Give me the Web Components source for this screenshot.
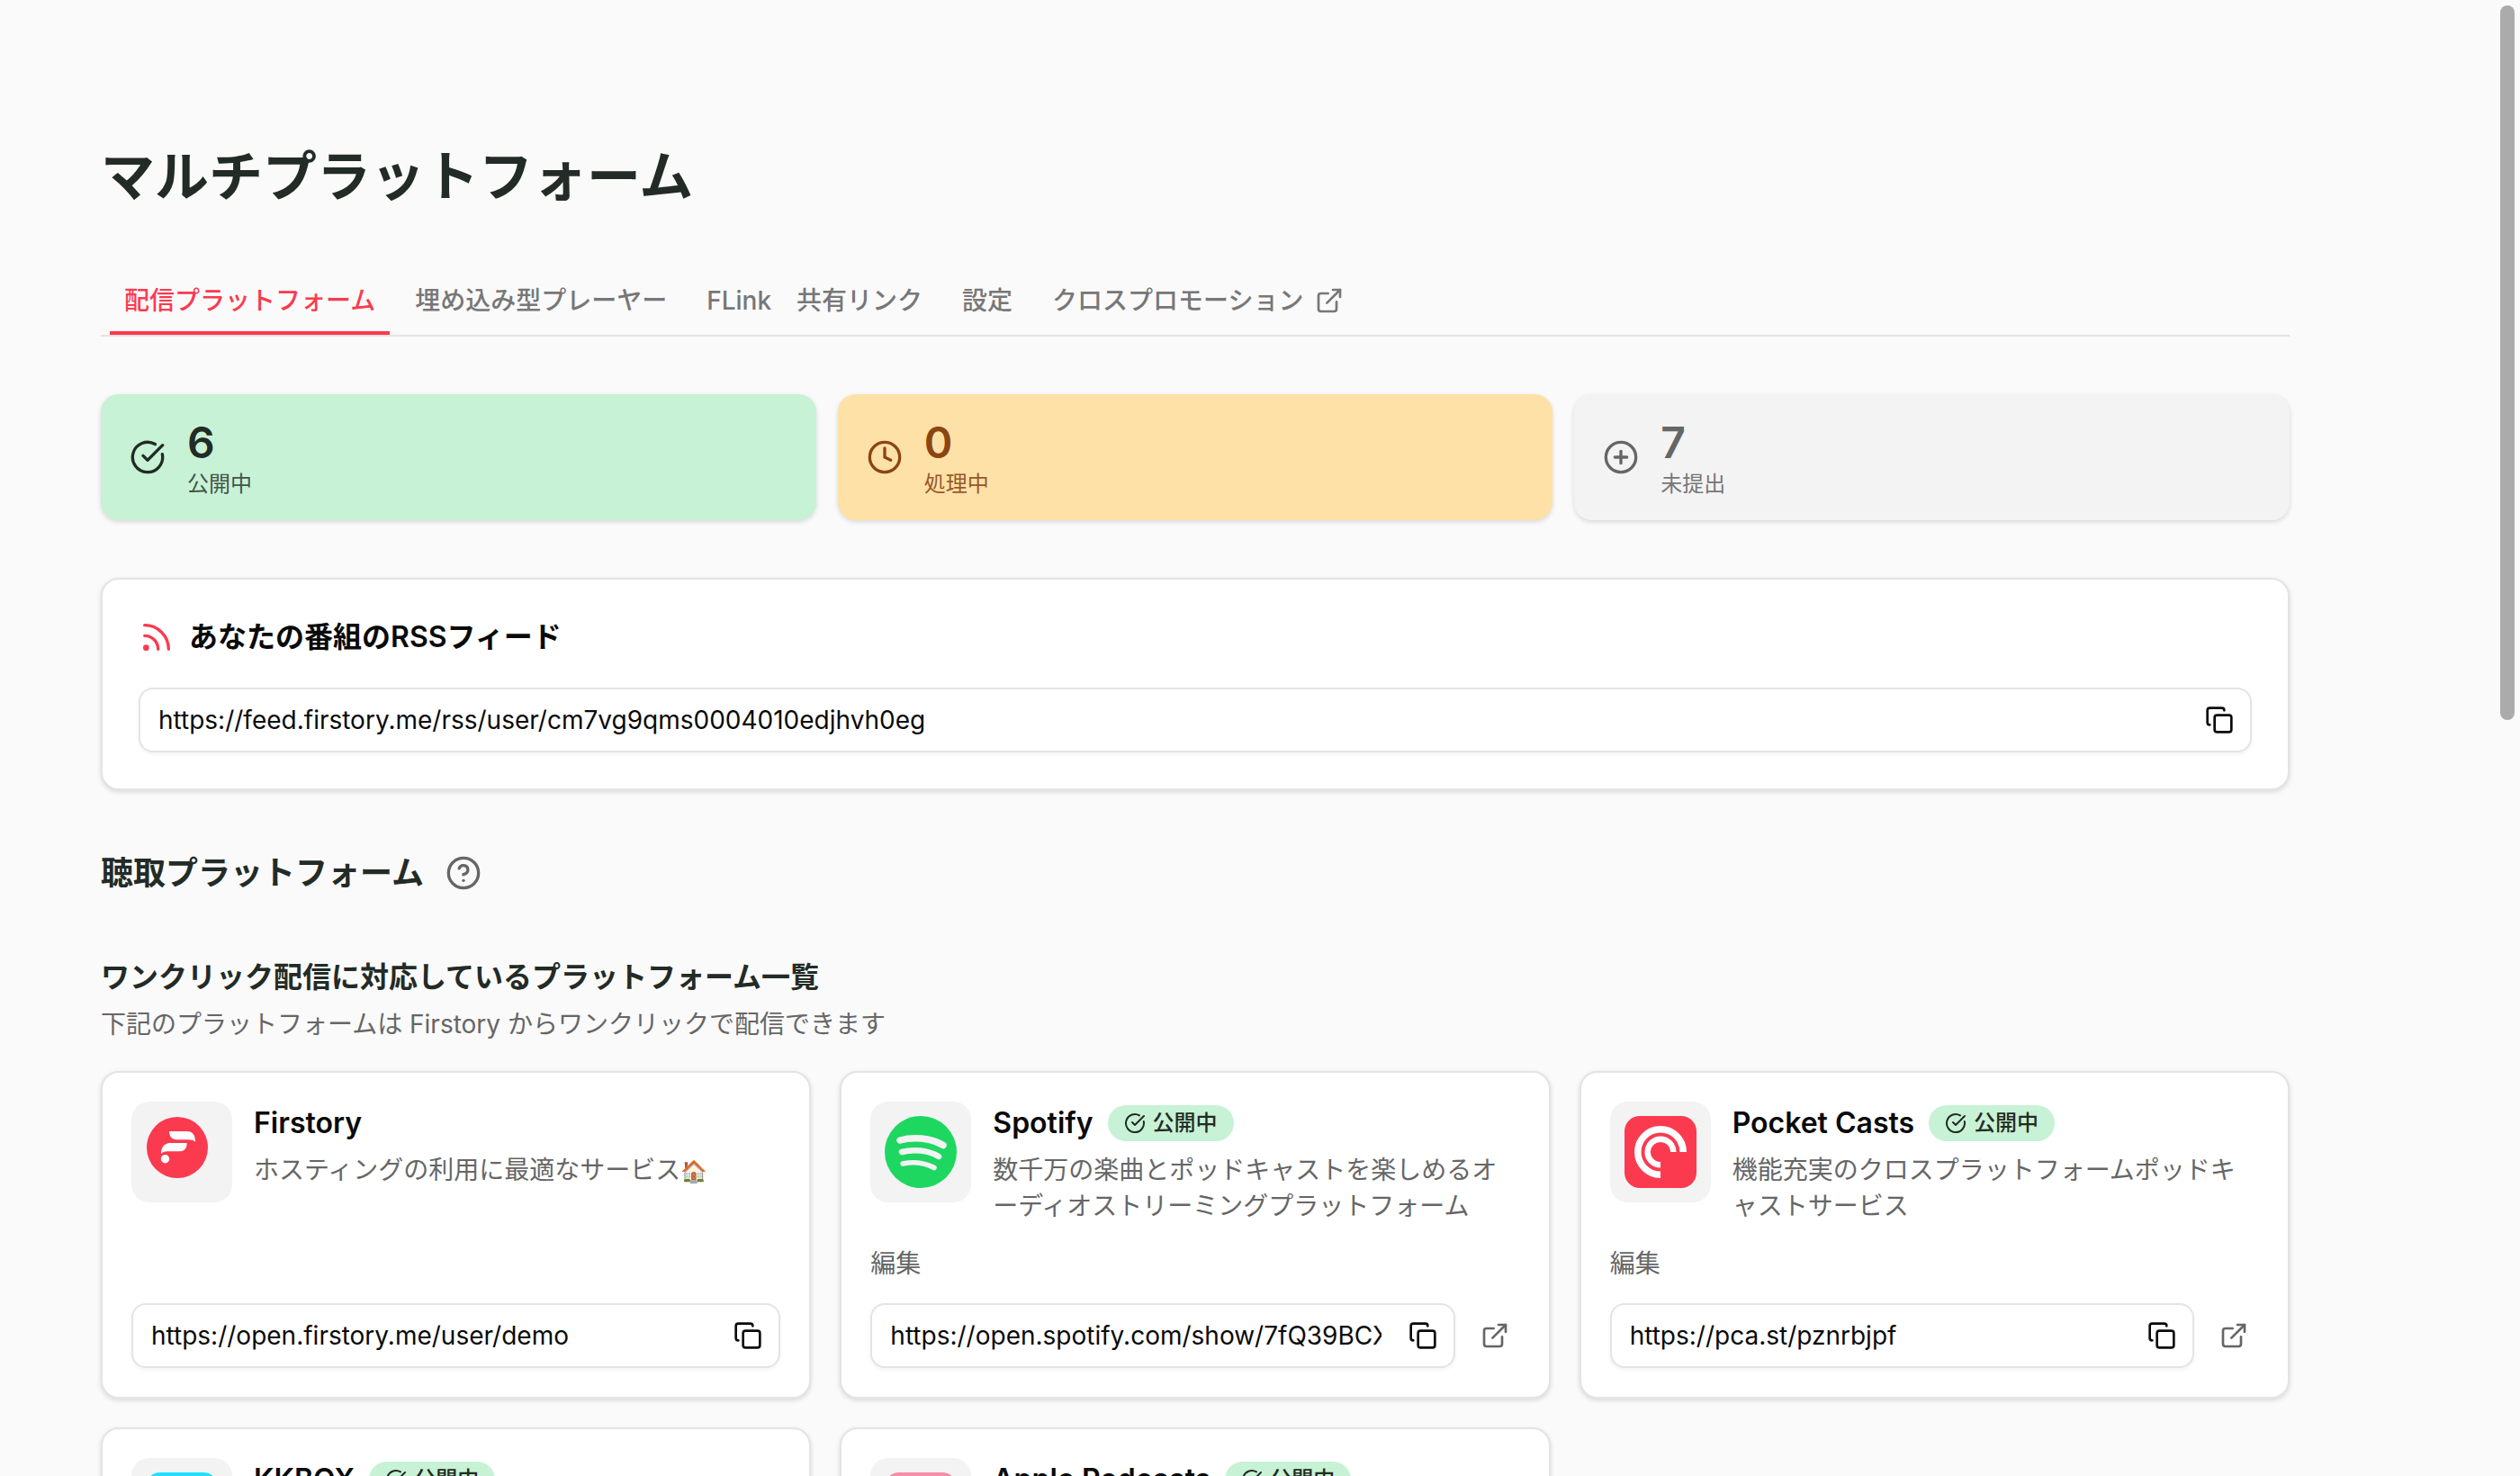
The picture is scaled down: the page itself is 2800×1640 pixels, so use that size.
<!DOCTYPE html>
<html lang="ja">
<head>
<meta charset="utf-8">
<meta name="viewport" content="width=device-width, initial-scale=1">
<title>マルチプラットフォーム</title>
<style>
    html {
        height: 100%;
    }

    body {
        margin: 0;
        height: 100%;
        background: #fafafa;
        color: #0a0a0a;
        font-family: Inter, "Noto Sans CJK JP", sans-serif;
        font-size: 28px;
        line-height: 40px;
        overflow: hidden;
        --border: #e4e4e4;
        --muted: #666;
        --title: #232b26;
        --brand: #fb3a50;
        --shadow: 0 2px 6px rgba(0, 0, 0, 0.09), 0 2px 4px rgba(0, 0, 0, 0.05);
    }
</style>
</head>
<body>
<multi-platform-page></multi-platform-page>

<script>
const ICONS = {
    external: '<path d="M15 3h6v6"/><path d="M10 14 21 3"/><path d="M18 13v6a2 2 0 0 1-2 2H5a2 2 0 0 1-2-2V8a2 2 0 0 1 2-2h6"/>',
    check: '<path d="M21.8 10A10 10 0 1 1 17 3.335"/><path d="m9 11 3 3L22 4"/>',
    clock: '<circle cx="12" cy="12" r="10"/><path d="M12 6v6l4 2"/>',
    plus: '<circle cx="12" cy="12" r="10"/><path d="M8 12h8"/><path d="M12 8v8"/>',
    rss: '<path d="M4 11a9 9 0 0 1 9 9"/><path d="M4 4a16 16 0 0 1 16 16"/><circle cx="5" cy="19" r="1"/>',
    copy: '<rect x="8" y="8" width="14" height="14" rx="2"/><path d="M4 16c-1.1 0-2-.9-2-2V4c0-1.1.9-2 2-2h10c1.1 0 2 .9 2 2"/>',
    help: '<circle cx="12" cy="12" r="10"/><path d="M9.09 9a3 3 0 0 1 5.83 1c0 2-3 3-3 3"/><path d="M12 17h.01"/>'
};

const LOGOS = {
    firstory: `
        <circle cx="35" cy="35" r="34" fill="#fb3a50"/>
        <path fill="#fff" d="M26 17h20c6 0 9 4.500 9 11.700-2-1.700-4-2.400-8-2.400H34c-5 0-8-4-8-9.300z"/>
        <path fill="#fff" d="M45.700 30c0 5-2.500 9.300-7.500 9.300H24c-3 0-5 .7-7 2.700 0-8 4-12 11-12z"/>
        <circle cx="21.500" cy="47.700" r="4.700" fill="#fff"/>`,
    spotify: `
        <circle cx="40" cy="40" r="40" fill="#1ed760"/>
        <g fill="none" stroke="#f3f3f3" stroke-linecap="round">
            <path stroke-width="7.5" d="M17 27c14-4 34-3 48 5.500"/>
            <path stroke-width="6.500" d="M19 40c13-3.500 29-2 41 5"/>
            <path stroke-width="5.500" d="M20 53c12-2.500 24-1.500 35 4.500"/>
        </g>`,
    pocketcasts: `
        <rect width="80" height="80" rx="17" fill="#fb3a50"/>
        <g fill="none" stroke="#fff">
            <path stroke-width="7.5" d="M40 65.200A25.200 25.200 0 1 1 65.200 40"/>
            <path stroke-width="6.500" d="M40 54.300A14.300 14.300 0 1 1 54.300 40"/>
        </g>`,
    kkbox: '<rect width="80" height="80" rx="16" fill="#1fe0ff"/>',
    podcasts: '<rect width="80" height="80" rx="16" fill="#f78da7"/>'
};

class AppIcon extends HTMLElement {
    constructor() {
        super();
        this.attachShadow({ mode: 'open' });
    }

    connectedCallback() {
        this.shadowRoot.innerHTML = `
            <style>
                :host {
                    display: block;
                    flex: none;
                    width: var(--icon-size, 32px);
                    height: var(--icon-size, 32px);
                }

                svg {
                    display: block;
                    width: 100%;
                    height: 100%;
                }
            </style>
            <svg viewBox="0 0 24 24" fill="none" stroke="currentColor" stroke-width="2"
                stroke-linecap="round" stroke-linejoin="round" aria-hidden="true">
                ${ICONS[this.getAttribute('name')] || ''}
            </svg>
        `;
    }
}

class TabBar extends HTMLElement {
    constructor() {
        super();
        this.attachShadow({ mode: 'open' });
        this.shadowRoot.innerHTML = `
            <style>
                :host {
                    display: block;
                }

                nav {
                    display: flex;
                    gap: 12px;
                    padding: 0 10px;
                    border-bottom: 2px solid var(--border);
                }
            </style>
            <nav><slot></slot></nav>
        `;
    }
}

class TabLink extends HTMLElement {
    constructor() {
        super();
        this.attachShadow({ mode: 'open' });
        this.shadowRoot.innerHTML = `
            <style>
                :host {
                    display: block;
                }

                a {
                    display: flex;
                    align-items: center;
                    gap: 12px;
                    padding: 12px 16px 14px;
                    border-bottom: 4px solid transparent;
                    color: #777;
                    font-weight: 500;
                    text-decoration: none;
                    white-space: nowrap;
                }

                :host([active]) a {
                    color: var(--brand);
                    border-bottom-color: var(--brand);
                }
            </style>
            <a href="#"><slot></slot></a>
        `;
    }
}

class StatCard extends HTMLElement {
    constructor() {
        super();
        this.attachShadow({ mode: 'open' });
    }

    connectedCallback() {
        this.shadowRoot.innerHTML = `
            <style>
                :host {
                    display: flex;
                    align-items: center;
                    gap: 24px;
                    padding: 24px 32px;
                    border-radius: 20px;
                    background: #f3f3f3;
                    color: var(--muted);
                    box-shadow: var(--shadow);
                    --icon-size: 40px;
                    --label: #777;
                }

                :host([tone="published"]) {
                    background: #c7f2d5;
                    color: var(--title);
                    --label: #45534a;
                }

                :host([tone="pending"]) {
                    background: #fee1a7;
                    color: #8b4513;
                    --label: #9a572a;
                }

                .count {
                    font-size: 48px;
                    line-height: 60px;
                    font-weight: 600;
                }

                .label {
                    color: var(--label);
                    font-size: 24px;
                    line-height: 32px;
                }
            </style>
            <app-icon name="${this.getAttribute('icon')}"></app-icon>
            <div>
                <div class="count">${this.getAttribute('count')}</div>
                <div class="label"><slot></slot></div>
            </div>
        `;
    }
}

class CopyField extends HTMLElement {
    constructor() {
        super();
        this.attachShadow({ mode: 'open' });
    }

    connectedCallback() {
        this.shadowRoot.innerHTML = `
            <style>
                :host {
                    display: block;
                    min-width: 0;
                }

                .field {
                    display: flex;
                    align-items: center;
                    gap: 30px;
                    height: 72px;
                    box-sizing: border-box;
                    padding: 0 18px 0 20px;
                    border: 2px solid var(--border);
                    border-radius: 16px;
                    background: #fff;
                    box-shadow: 0 2px 4px rgba(0, 0, 0, 0.05);
                }

                input {
                    flex: 1;
                    min-width: 0;
                    height: 40px;
                    padding: 0;
                    border: 0;
                    outline: 0;
                    background: none;
                    color: inherit;
                    font: inherit;
                }

                button {
                    padding: 0;
                    border: 0;
                    background: none;
                    color: inherit;
                    cursor: pointer;
                }
            </style>
            <div class="field">
                <input type="text" readonly aria-label="${this.getAttribute('label')}" value="${this.getAttribute('value')}">
                <button type="button" aria-label="コピー"><app-icon name="copy"></app-icon></button>
            </div>
        `;
        this.shadowRoot.querySelector('button').addEventListener('click', () => this._copy());
    }

    _copy() {
        const input = this.shadowRoot.querySelector('input');
        input.select();
        document.execCommand('copy');
    }
}

class StatusBadge extends HTMLElement {
    constructor() {
        super();
        this.attachShadow({ mode: 'open' });
        this.shadowRoot.innerHTML = `
            <style>
                :host {
                    display: flex;
                    align-items: center;
                    gap: 8px;
                    height: 40px;
                    padding: 0 18px;
                    border-radius: 20px;
                    background: #c7f2d5;
                    color: var(--title);
                    font-size: 24px;
                    line-height: 40px;
                    font-weight: 500;
                    white-space: nowrap;
                    --icon-size: 24px;
                }
            </style>
            <app-icon name="check"></app-icon>
            <span><slot></slot></span>
        `;
    }
}

class PlatformCard extends HTMLElement {
    constructor() {
        super();
        this.attachShadow({ mode: 'open' });
    }

    connectedCallback() {
        const name = this.getAttribute('name');
        const url = this.getAttribute('url');
        const published = this.hasAttribute('published');

        this.shadowRoot.innerHTML = `
            <style>
                :host {
                    display: flex;
                    flex-direction: column;
                    gap: 24px;
                    padding: 32px;
                    border: 2px solid var(--border);
                    border-radius: 20px;
                    background: #fff;
                    box-shadow: var(--shadow);
                }

                .head {
                    display: flex;
                    align-items: flex-start;
                    gap: 24px;
                }

                .logo {
                    flex: none;
                    display: flex;
                    padding: 16px;
                    border-radius: 20px;
                    background: #f3f3f3;
                }

                .logo svg {
                    width: 80px;
                    height: 80px;
                }

                .title {
                    display: flex;
                    align-items: center;
                    gap: 16px;
                    height: 48px;
                    margin-bottom: 8px;
                }

                h4 {
                    margin: 0;
                    font-size: 32px;
                    line-height: 48px;
                    font-weight: 600;
                    white-space: nowrap;
                }

                p {
                    margin: 0;
                    color: var(--muted);
                    line-break: anywhere;
                }

                .edit {
                    align-self: flex-start;
                    padding: 0;
                    border: 0;
                    background: none;
                    color: var(--muted);
                    font: inherit;
                    cursor: pointer;
                }

                .links {
                    display: flex;
                    align-items: center;
                    gap: 16px;
                    margin-top: auto;
                }

                copy-field {
                    flex: 1;
                }

                .open {
                    padding: 12px;
                    color: var(--muted);
                }
            </style>
            <div class="head">
                <div class="logo">
                    <svg viewBox="0 0 80 80" role="img" aria-label="${name}">${LOGOS[this.getAttribute('logo')]}</svg>
                </div>
                <div>
                    <div class="title">
                        <h4>${name}</h4>
                        ${published ? '<status-badge>公開中</status-badge>' : ''}
                    </div>
                    <p><slot></slot></p>
                </div>
            </div>
            ${published ? '<button class="edit" type="button">編集</button>' : ''}
            <div class="links">
                <copy-field label="${name} URL" value="${url}"></copy-field>
                ${published ? `<a class="open" href="${url}" aria-label="${name}"><app-icon name="external"></app-icon></a>` : ''}
            </div>
        `;
    }
}

class ScrollThumb extends HTMLElement {
    constructor() {
        super();
        this.attachShadow({ mode: 'open' });
        this.shadowRoot.innerHTML = `
            <style>
                :host {
                    position: absolute;
                    top: 6px;
                    right: 6px;
                    width: 16px;
                    height: 794px;
                    border-radius: 8px;
                    background: #ababab;
                }
            </style>
        `;
    }
}

class MultiPlatformPage extends HTMLElement {
    constructor() {
        super();
        this.attachShadow({ mode: 'open' });
    }

    connectedCallback() {
        this.shadowRoot.innerHTML = `
            <style>
                :host {
                    display: block;
                    position: relative;
                    height: 100%;
                    overflow: hidden;
                }

                main {
                    padding: 152px 256px 64px 112px;
                }

                h1, h2, h3, p {
                    margin: 0;
                }

                h1 {
                    color: var(--title);
                    font-size: 60px;
                    line-height: 88px;
                    font-weight: 700;
                }

                tab-bar {
                    margin-top: 62px;
                }

                .stats {
                    display: grid;
                    grid-template-columns: repeat(3, 1fr);
                    gap: 24px;
                    margin-top: 64px;
                }

                .feed {
                    display: flex;
                    flex-direction: column;
                    gap: 32px;
                    margin-top: 64px;
                    padding: 40px;
                    border: 2px solid var(--border);
                    border-radius: 20px;
                    background: #fff;
                    box-shadow: var(--shadow);
                }

                .feed h2 {
                    display: flex;
                    align-items: center;
                    gap: 16px;
                    font-size: 32px;
                    line-height: 48px;
                    font-weight: 600;
                }

                .feed h2 app-icon {
                    --icon-size: 40px;
                    color: var(--brand);
                }

                .heading {
                    display: flex;
                    align-items: center;
                    gap: 24px;
                    margin-top: 64px;
                    color: var(--title);
                }

                .heading h2 {
                    font-size: 36px;
                    line-height: 56px;
                    font-weight: 600;
                }

                .heading button {
                    padding: 0;
                    border: 0;
                    background: none;
                    color: var(--muted);
                    --icon-size: 40px;
                }

                h3 {
                    margin-top: 64px;
                    color: var(--title);
                    font-size: 32px;
                    line-height: 48px;
                    font-weight: 600;
                }

                .note {
                    margin-top: 8px;
                    color: var(--muted);
                }

                .platforms {
                    display: grid;
                    grid-template-columns: repeat(3, 1fr);
                    gap: 32px;
                    margin-top: 32px;
                }

                .emoji {
                    font-size: 24px;
                }
            </style>
            <main>
                <h1>マルチプラットフォーム</h1>
                <tab-bar>
                    <tab-link active>配信プラットフォーム</tab-link>
                    <tab-link>埋め込み型プレーヤー</tab-link>
                    <tab-link>FLink　共有リンク</tab-link>
                    <tab-link>設定</tab-link>
                    <tab-link>クロスプロモーション<app-icon name="external"></app-icon></tab-link>
                </tab-bar>
                <div class="stats">
                    <stat-card tone="published" icon="check" count="6">公開中</stat-card>
                    <stat-card tone="pending" icon="clock" count="0">処理中</stat-card>
                    <stat-card icon="plus" count="7">未提出</stat-card>
                </div>
                <section class="feed">
                    <h2><app-icon name="rss"></app-icon><span>あなたの番組のRSSフィード</span></h2>
                    <copy-field label="RSSフィード" value="https://feed.firstory.me/rss/user/cm7vg9qms0004010edjhvh0eg"></copy-field>
                </section>
                <div class="heading">
                    <h2>聴取プラットフォーム</h2>
                    <button type="button" aria-label="ヘルプ"><app-icon name="help"></app-icon></button>
                </div>
                <h3>ワンクリック配信に対応しているプラットフォーム一覧</h3>
                <p class="note">下記のプラットフォームは Firstory からワンクリックで配信できます</p>
                <div class="platforms">
                    <platform-card name="Firstory" logo="firstory" url="https://open.firstory.me/user/demo">ホスティングの利用に最適なサービス<span class="emoji">🏠</span></platform-card>
                    <platform-card name="Spotify" logo="spotify" url="https://open.spotify.com/show/7fQ39BCX" published>数千万の楽曲とポッドキャストを楽しめるオーディオストリーミングプラットフォーム</platform-card>
                    <platform-card name="Pocket Casts" logo="pocketcasts" url="https://pca.st/pznrbjpf" published>機能充実のクロスプラットフォームポッドキャストサービス</platform-card>
                    <platform-card name="KKBOX" logo="kkbox" url="https://podcast.kkbox.com/" published></platform-card>
                    <platform-card name="Apple Podcasts" logo="podcasts" url="https://podcasts.apple.com/" published></platform-card>
                </div>
            </main>
            <scroll-thumb></scroll-thumb>
        `;
    }
}

customElements.define('app-icon', AppIcon);
customElements.define('tab-bar', TabBar);
customElements.define('tab-link', TabLink);
customElements.define('stat-card', StatCard);
customElements.define('copy-field', CopyField);
customElements.define('status-badge', StatusBadge);
customElements.define('platform-card', PlatformCard);
customElements.define('scroll-thumb', ScrollThumb);
customElements.define('multi-platform-page', MultiPlatformPage);
</script>
</body>
</html>
